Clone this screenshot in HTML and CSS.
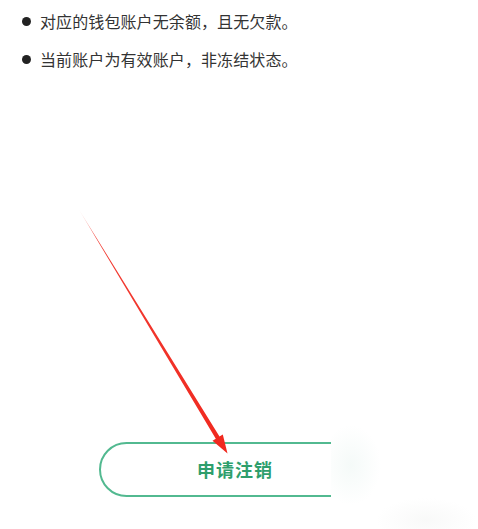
FILE: index.html
```html
<!DOCTYPE html>
<html lang="zh">
<head>
<meta charset="utf-8">
<link rel="stylesheet" href="styles.css">
</head>
<body>
<div class="page">
  <ul class="rules">
    <li>对应的钱包账户无余额，且无欠款。</li>
    <li>当前账户为有效账户，非冻结状态。</li>
  </ul>
  <div class="actions">
    <button class="apply">申请注销</button>
  </div>
  <div class="blur-patch"></div>
  <svg class="arrow" width="478" height="529" viewBox="0 0 478 529">
    <defs>
      <linearGradient id="fade" x1="78" y1="208" x2="227" y2="453" gradientUnits="userSpaceOnUse">
        <stop offset="0" stop-color="#f0281e" stop-opacity="0"/>
        <stop offset="0.12" stop-color="#f0281e" stop-opacity="0.9"/>
        <stop offset="1" stop-color="#f0281e"/>
      </linearGradient>
    </defs>
    <polygon points="78,208 215.8,438.8 212.5,440.7 227.5,453.5 222.8,434.5 219.5,436.5" fill="url(#fade)"/>
  </svg>
</div>
</body>
</html>
```
FILE: styles.css
```css
html, body {
  margin: 0;
  padding: 0;
  background: #ffffff;
}
.page {
  position: relative;
  width: 478px;
  height: 529px;
  overflow: hidden;
  font-family: "Noto Sans CJK SC", "Noto Sans", sans-serif;
}
.rules {
  list-style: none;
  margin: 0;
  padding: 10px 0 0 22px;
  display: flex;
  flex-direction: column;
  gap: 16px;
}
.rules li {
  display: flex;
  align-items: center;
  gap: 9px;
  font-size: 16px;
  line-height: 22px;
  color: #333333;
  letter-spacing: 0.1px;
}
.rules li::before {
  content: "";
  width: 9px;
  height: 9px;
  border-radius: 50%;
  background: #222222;
  flex: none;
}
.actions {
  margin-top: 372px;
  padding-left: 99px;
}
.apply {
  display: flex;
  align-items: center;
  justify-content: center;
  width: 272px;
  height: 55px;
  box-sizing: border-box;
  border: 2px solid #52b990;
  border-radius: 28px;
  background: #ffffff;
  color: #2e9e6c;
  font-family: "Noto Sans CJK SC", sans-serif;
  font-size: 18px;
  font-weight: 700;
  letter-spacing: 1px;
  padding: 0 0 2px 0;
}
.blur-patch {
  position: absolute;
  left: 331px;
  top: 420px;
  width: 147px;
  height: 109px;
  background:
    radial-gradient(ellipse 30px 40px at 20px 45px, rgba(232, 244, 240, 0.45), rgba(255,255,255,0) 100%),
    radial-gradient(ellipse 50px 22px at 95px 100px, rgba(242, 243, 242, 0.5), rgba(255,255,255,0) 100%),
    #ffffff;
}
.arrow {
  position: absolute;
  left: 0;
  top: 0;
  pointer-events: none;
}
```
